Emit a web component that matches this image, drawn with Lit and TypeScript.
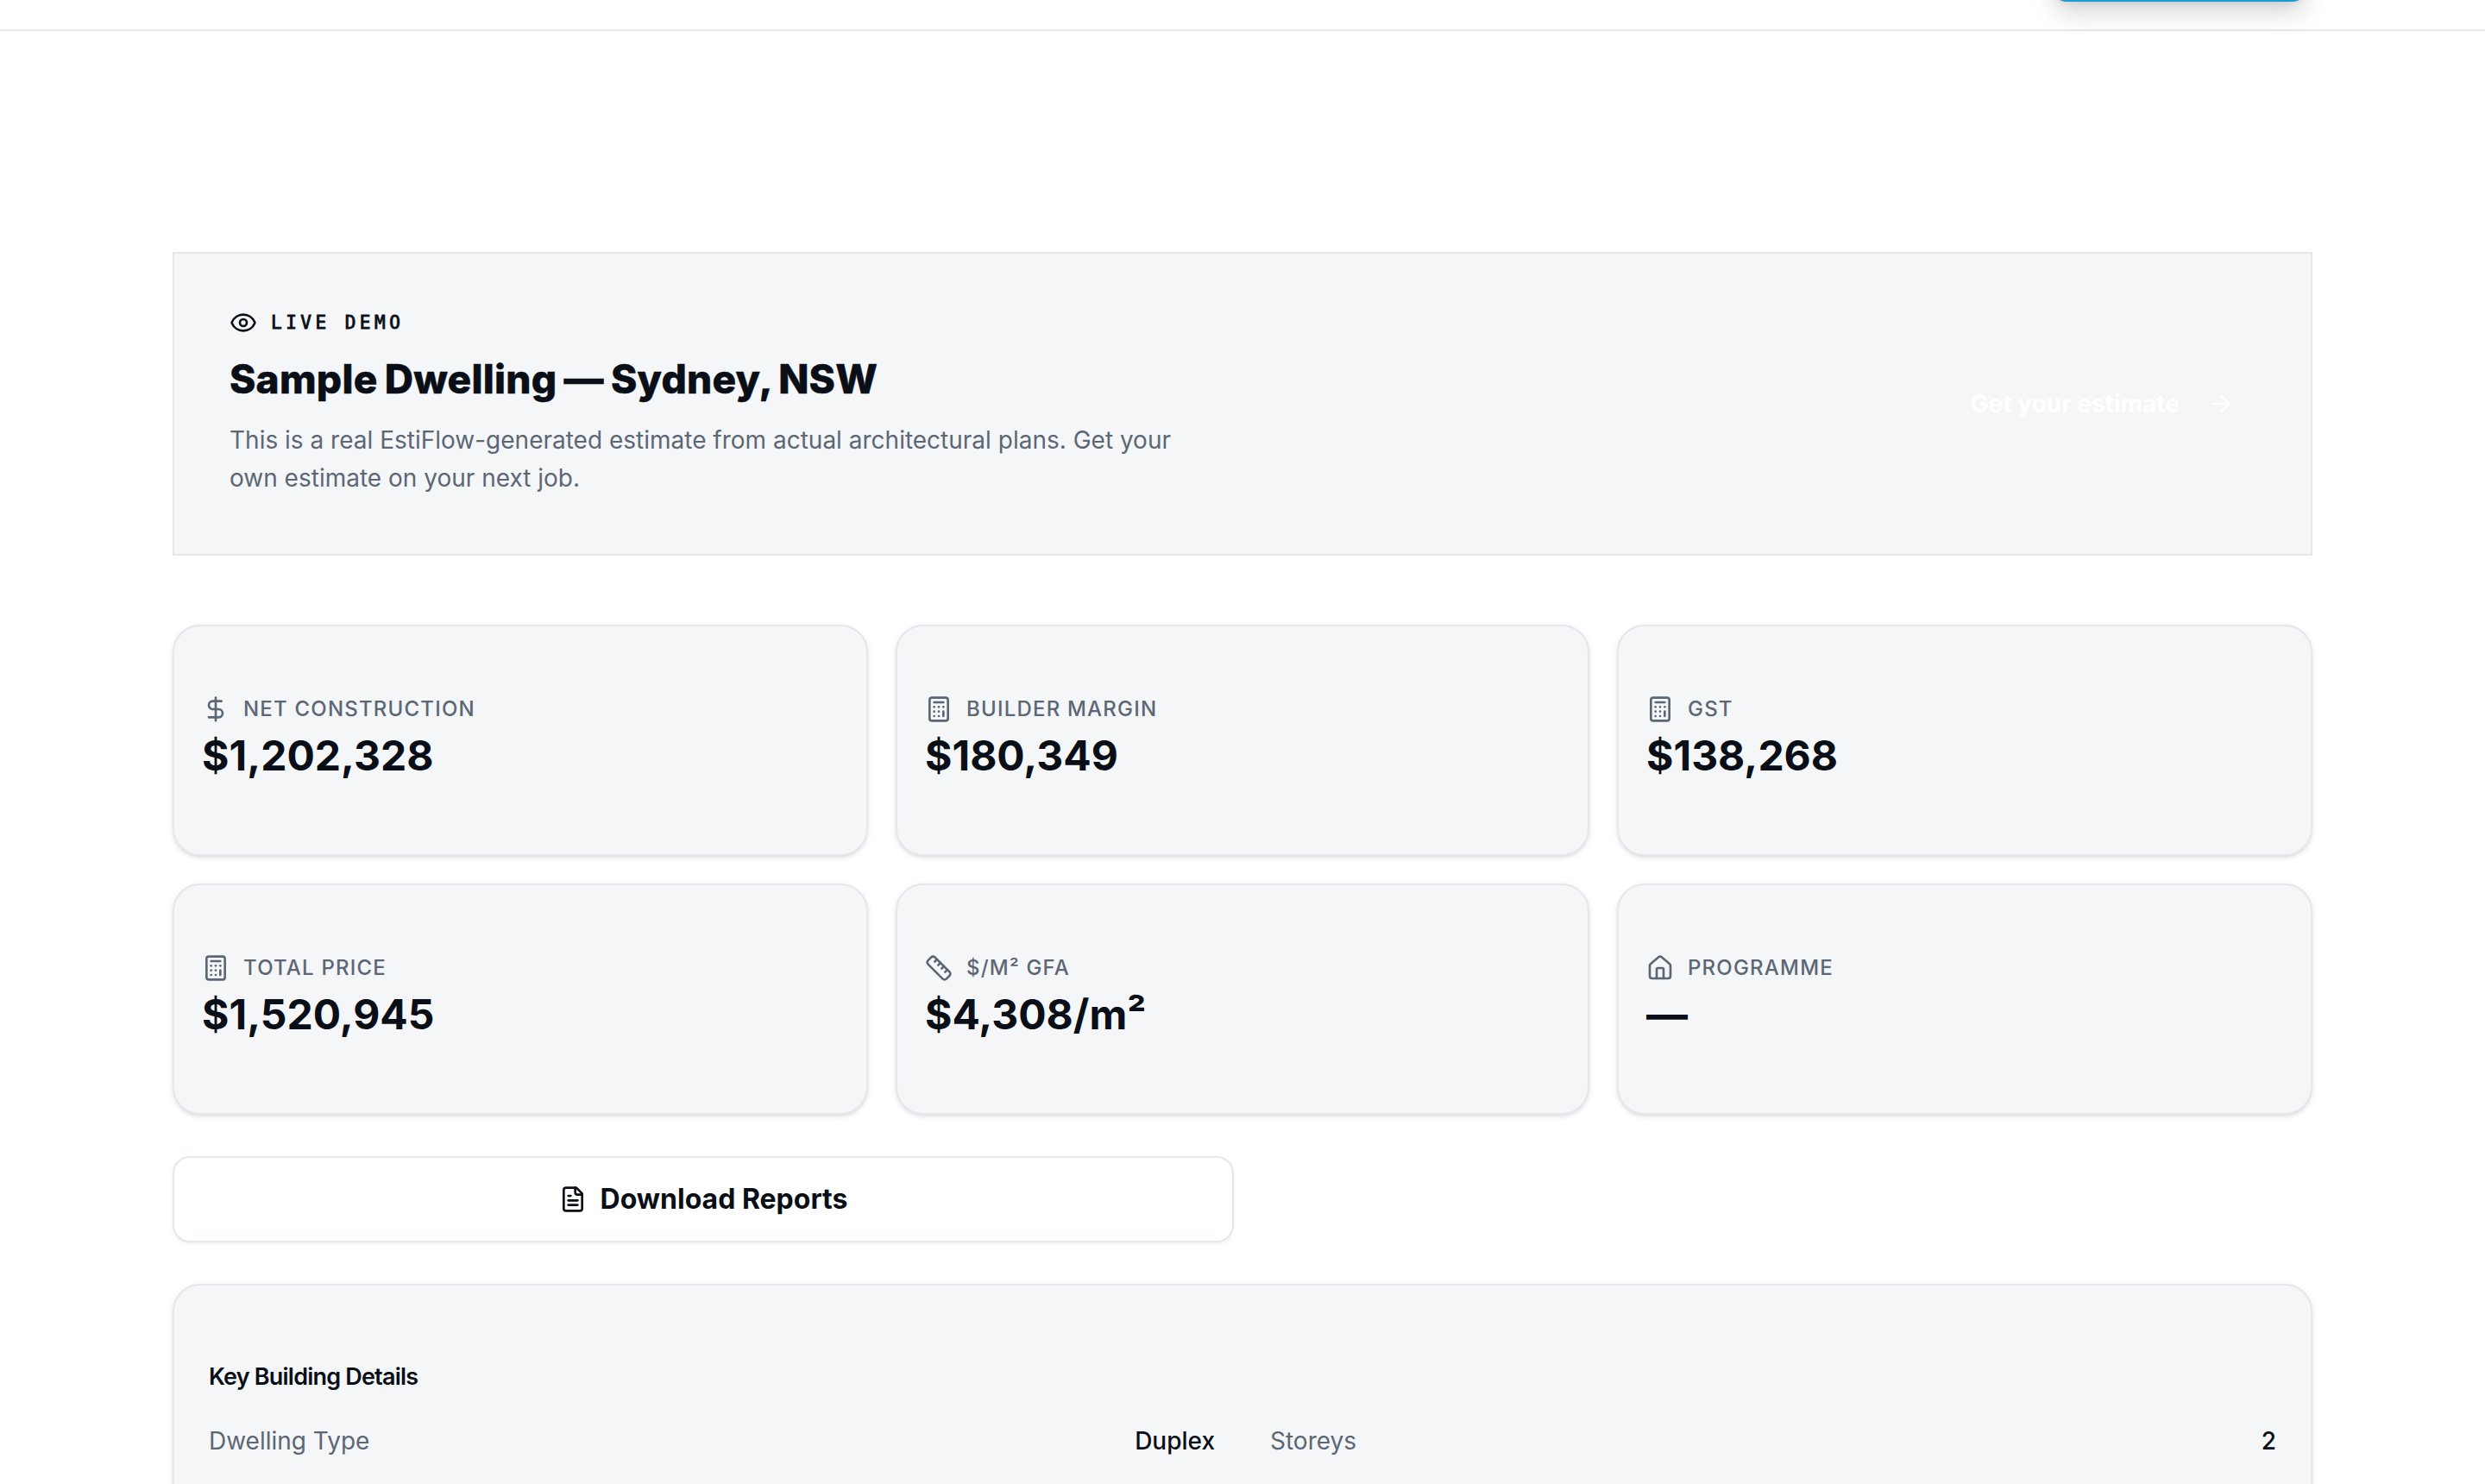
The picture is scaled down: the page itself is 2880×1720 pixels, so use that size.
import { LitElement, html, css, svg } from "lit";
import { customElement, property } from "lit/decorators.js";

const ICONS: Record<string, unknown> = {
  eye: svg`<path d="M2.062 12.348a1 1 0 0 1 0-.696 10.75 10.75 0 0 1 19.876 0 1 1 0 0 1 0 .696 10.75 10.75 0 0 1-19.876 0"/><circle cx="12" cy="12" r="3"/>`,
  arrow: svg`<path d="M5 12h14"/><path d="m12 5 7 7-7 7"/>`,
  dollar: svg`<line x1="12" x2="12" y1="2" y2="22"/><path d="M17 5H9.5a3.5 3.5 0 0 0 0 7h5a3.5 3.5 0 0 1 0 7H6"/>`,
  calculator: svg`<rect width="16" height="20" x="4" y="2" rx="2"/><line x1="8" x2="16" y1="6" y2="6"/><line x1="16" x2="16" y1="14" y2="18"/><path d="M16 10h.01"/><path d="M12 10h.01"/><path d="M8 10h.01"/><path d="M12 14h.01"/><path d="M8 14h.01"/><path d="M12 18h.01"/><path d="M8 18h.01"/>`,
  ruler: svg`<path d="M21.3 15.3a2.4 2.4 0 0 1 0 3.4l-2.6 2.6a2.4 2.4 0 0 1-3.4 0L2.7 8.7a2.41 2.41 0 0 1 0-3.4l2.6-2.6a2.41 2.41 0 0 1 3.4 0Z"/><path d="m14.5 12.5 2-2"/><path d="m11.5 9.5 2-2"/><path d="m8.5 6.5 2-2"/><path d="m17.5 15.5 2-2"/>`,
  house: svg`<path d="M15 21v-8a1 1 0 0 0-1-1h-4a1 1 0 0 0-1 1v8"/><path d="M3 10a2 2 0 0 1 .709-1.528l7-5.999a2 2 0 0 1 2.582 0l7 5.999A2 2 0 0 1 21 10v9a2 2 0 0 1-2 2H5a2 2 0 0 1-2-2z"/>`,
  file: svg`<path d="M15 2H6a2 2 0 0 0-2 2v16a2 2 0 0 0 2 2h12a2 2 0 0 0 2-2V7Z"/><path d="M14 2v4a2 2 0 0 0 2 2h4"/><path d="M10 9H8"/><path d="M16 13H8"/><path d="M16 17H8"/>`,
};

@customElement("line-icon")
class LineIcon extends LitElement {
  @property() name = "";
  static styles = css`
    :host { display: block; width: 32px; height: 32px; flex: none; }
    .glyph { display: block; width: 32px; height: 32px; fill: none; stroke: currentColor; stroke-width: 2; stroke-linecap: round; stroke-linejoin: round; }
  `;
  render() {
    return html`<svg class="glyph" viewBox="0 0 24 24">${ICONS[this.name]}</svg>`;
  }
}

@customElement("stat-card")
class StatCard extends LitElement {
  @property() icon = "";
  @property() label = "";
  @property() value = "";
  static styles = css`
    :host {
      display: block; box-sizing: border-box; height: 268px; padding: 80px 32px 0;
      border: 2px solid #e4e8ed; border-radius: 32px; background: #f4f6f8;
      box-shadow: 0 2px 6px 0 rgb(0 0 0 / 0.1), 0 2px 4px -2px rgb(0 0 0 / 0.1);
    }
    .label { display: flex; align-items: center; gap: 16px; height: 32px; color: #5c6775; font-size: 24px; line-height: 32px; font-weight: 500; letter-spacing: 1.2px; text-transform: uppercase; }
    .value { margin-top: 6px; color: #0a0e17; font-size: 48px; line-height: 64px; font-weight: 700; }
  `;
  render() {
    return html`
      <div class="label"><line-icon name=${this.icon}></line-icon><span>${this.label}</span></div>
      <div class="value">${this.value}</div>`;
  }
}

const STATS = [
  { icon: "dollar", label: "Net Construction", value: "$1,202,328" },
  { icon: "calculator", label: "Builder Margin", value: "$180,349" },
  { icon: "calculator", label: "GST", value: "$138,268" },
  { icon: "calculator", label: "Total Price", value: "$1,520,945" },
  { icon: "ruler", label: "$/m² GFA", value: "$4,308/m²" },
  { icon: "house", label: "Programme", value: "—" },
];

const DETAILS = [
  ["Dwelling Type", "Duplex"],
  ["Storeys", "2"],
];

@customElement("app-root")
class AppRoot extends LitElement {
  static styles = css`
    :host { display: block; width: 2880px; height: 1720px; overflow: hidden; background: #fff; color: #0a0e17; font-family: Inter, "Liberation Sans", sans-serif; }
    .header { box-sizing: border-box; height: 36px; padding-right: 204px; border-bottom: 2px solid #e4e8ed; display: flex; justify-content: flex-end; align-items: flex-start; }
    .cta { width: 300px; height: 80px; margin-top: -78px; border-radius: 20px; background: #1a9bd3; box-shadow: 0 18px 30px -6px rgb(0 0 0 / 0.17), 0 8px 12px -8px rgb(0 0 0 / 0.1); }
    .page { width: 2480px; margin: 0 auto; padding-top: 256px; }
    .banner { box-sizing: border-box; height: 352px; padding: 64px; border: 2px solid #e4e8ed; background: #f4f6f8; display: flex; justify-content: space-between; align-items: center; }
    .intro { width: 1152px; height: 220px; }
    .eyebrow { display: flex; align-items: center; gap: 16px; height: 32px; font-family: "DejaVu Sans Mono", "Liberation Mono", monospace; font-size: 21px; letter-spacing: 4.5px; line-height: 32px; -webkit-text-stroke: 0.9px #0a0e17; }
    .title { margin: 21px 0 0; font-size: 46px; line-height: 56px; font-weight: 800; letter-spacing: 0.25px; word-spacing: -2.2px; -webkit-text-stroke: 0.5px #0a0e17; white-space: nowrap; }
    .lead { margin: 21px 0 0; font-size: 28px; line-height: 44px; color: #5c6775; }
    .estimate { display: flex; align-items: center; gap: 32px; padding-right: 24px; color: #fff; font-size: 28px; line-height: 40px; font-weight: 700; }
    .stats { margin-top: 80px; display: grid; grid-template-columns: 806px 804px 806px; gap: 32px; }
    .download { box-sizing: border-box; width: 1230px; height: 100px; margin-top: 48px; border: 2px solid #e4e8ed; border-radius: 20px; background: #fff; box-shadow: 0 2px 4px 0 rgb(0 0 0 / 0.05); display: flex; align-items: center; justify-content: center; gap: 16px; font-size: 32px; font-weight: 700; line-height: 48px; }
    .details { box-sizing: border-box; height: 600px; margin-top: 48px; padding: 86px 40px 0; border: 2px solid #e4e8ed; border-radius: 32px; background: #f4f6f8; box-shadow: 0 2px 6px 0 rgb(0 0 0 / 0.1), 0 2px 4px -2px rgb(0 0 0 / 0.1); }
    .subtitle { margin: 0; font-size: 27px; line-height: 40px; font-weight: 600; letter-spacing: -0.8px; }
    .rows { margin-top: 34px; display: grid; grid-template-columns: 1fr 1fr; column-gap: 64px; }
    .row { display: flex; justify-content: space-between; font-size: 28px; line-height: 40px; }
    .key { color: #5c6775; }
    .val { font-weight: 500; }
  `;
  render() {
    return html`
      <header class="header"><div class="cta"></div></header>
      <main class="page">
        <section class="banner">
          <div class="intro">
            <div class="eyebrow"><line-icon name="eye"></line-icon><span>LIVE DEMO</span></div>
            <h1 class="title">Sample Dwelling — Sydney, NSW</h1>
            <p class="lead">This is a real EstiFlow-generated estimate from actual architectural plans. Get your own estimate on your next job.</p>
          </div>
          <div class="estimate"><span>Get your estimate</span><line-icon name="arrow"></line-icon></div>
        </section>
        <section class="stats">
          ${STATS.map((s) => html`<stat-card icon=${s.icon} label=${s.label} value=${s.value}></stat-card>`)}
        </section>
        <div class="download"><line-icon name="file"></line-icon><span>Download Reports</span></div>
        <section class="details">
          <h2 class="subtitle">Key Building Details</h2>
          <div class="rows">
            ${DETAILS.map(([k, v]) => html`<div class="row"><span class="key">${k}</span><span class="val">${v}</span></div>`)}
          </div>
        </section>
      </main>`;
  }
}
